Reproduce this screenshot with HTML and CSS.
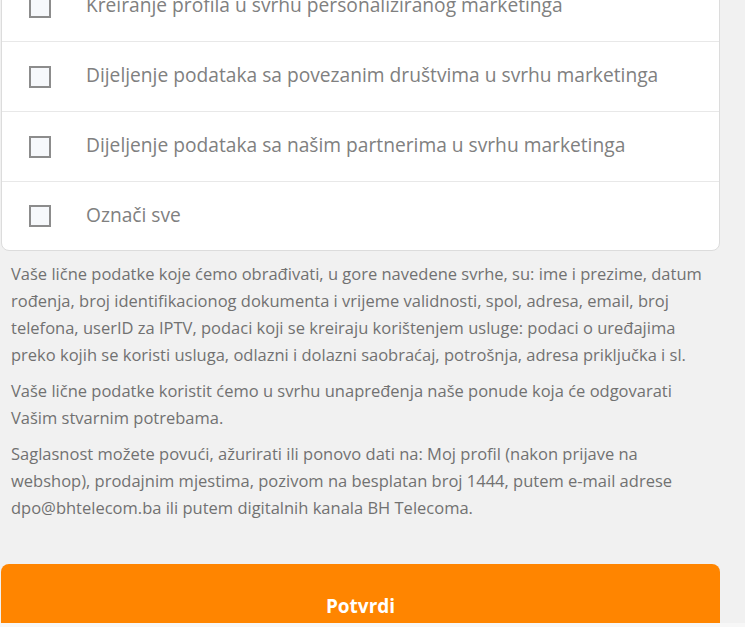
FILE: index.html
```html
<!DOCTYPE html>
<html lang="bs">
<head>
    <meta charset="UTF-8">
    <meta name="viewport" content="width=device-width, initial-scale=1.0">
    <link rel="stylesheet" href="styles.css">
    <title>Saglasnost</title>
</head>
<body>
    <div class="consent-page">
        <div class="consent-card">
            <label class="consent-row">
                <span class="check-box"></span>
                <span class="consent-text">Kreiranje profila u svrhu personaliziranog marketinga</span>
            </label>
            <label class="consent-row">
                <span class="check-box"></span>
                <span class="consent-text">Dijeljenje podataka sa povezanim društvima u svrhu marketinga</span>
            </label>
            <label class="consent-row">
                <span class="check-box"></span>
                <span class="consent-text">Dijeljenje podataka sa našim partnerima u svrhu marketinga</span>
            </label>
            <label class="consent-row">
                <span class="check-box"></span>
                <span class="consent-text">Označi sve</span>
            </label>
        </div>

        <div class="consent-info">
            <p>Vaše lične podatke koje ćemo obrađivati, u gore navedene svrhe, su: ime i prezime, datum rođenja, broj identifikacionog dokumenta i vrijeme validnosti, spol, adresa, email, broj telefona, userID za IPTV, podaci koji se kreiraju korištenjem usluge: podaci o uređajima preko kojih se koristi usluga, odlazni i dolazni saobraćaj, potrošnja, adresa priključka i sl.</p>
            <p>Vaše lične podatke koristit ćemo u svrhu unapređenja naše ponude koja će odgovarati Vašim stvarnim potrebama.</p>
            <p>Saglasnost možete povući, ažurirati ili ponovo dati na: Moj profil (nakon prijave na webshop), prodajnim mjestima, pozivom na besplatan broj 1444, putem e-mail adrese dpo@bhtelecom.ba ili putem digitalnih kanala BH Telecoma.</p>
        </div>

        <button class="confirm-btn">Potvrdi</button>
    </div>
    <div class="bottom-bar"></div>
</body>
</html>
```

FILE: styles.css
```css
body {
    font-family: "Open Sans", "Liberation Sans", sans-serif;
    margin: 0;
    background-color: #f1f1f1;
    overflow: hidden;
}

.consent-page {
    width: 719px;
    margin-left: 1px;
}

.consent-card {
    margin-top: -29px;
    background-color: #fff;
    border: 1px solid #dcdcdc;
    border-radius: 0 0 8px 8px;
}

.consent-row {
    display: flex;
    align-items: center;
    height: 69px;
    padding-left: 27px;
    border-bottom: 1px solid #e8e8e8;
}

.consent-row:last-child {
    border-bottom: none;
    height: 68px;
}

.check-box {
    width: 18px;
    height: 18px;
    border: 2px solid #8c8c8c;
    background-color: #f6f8fb;
    margin-right: 35px;
    flex-shrink: 0;
}

.consent-text {
    font-size: 19.2px;
    color: #808080;
    padding-bottom: 4px;
}

.consent-info {
    padding: 9px 10px 0;
}

.consent-info p {
    margin: 0 0 9px;
    font-size: 16.5px;
    line-height: 27px;
    color: #717171;
}

.confirm-btn {
    display: block;
    width: 100%;
    height: 84px;
    margin-top: 43px;
    border: none;
    border-radius: 8px;
    background-color: #ff8500;
    color: #fff;
    font-family: inherit;
    font-size: 19px;
    font-weight: bold;
    cursor: pointer;
}

.bottom-bar {
    position: fixed;
    left: 0;
    right: 0;
    bottom: 0;
    height: 4px;
    background-color: #f7f7f7;
}
```
